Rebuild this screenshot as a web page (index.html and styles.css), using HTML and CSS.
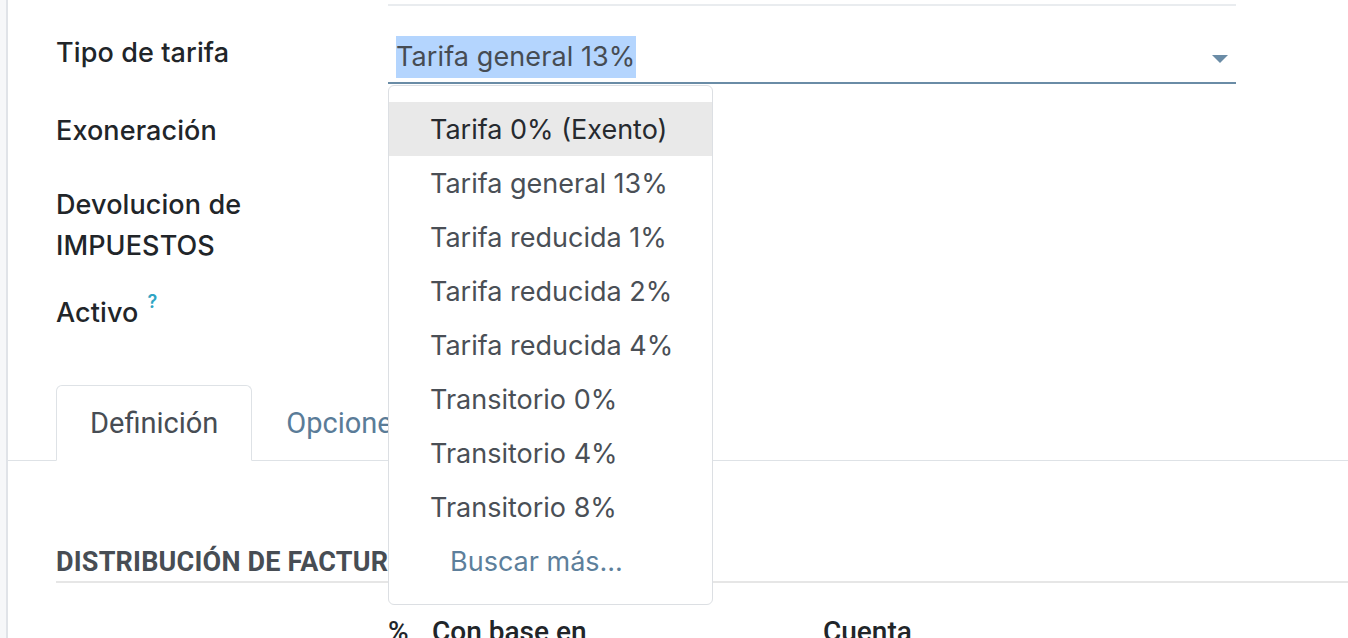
FILE: index.html
```html
<!DOCTYPE html>
<html lang="es">
<head>
<meta charset="utf-8">
<title>Impuesto</title>
<link rel="stylesheet" href="styles.css">
</head>
<body>
<div class="page">
  <div class="gutter"></div>
  <div class="sheet">
    <div class="prev-line"></div>
    <div class="form">
      <div class="label l1">Tipo de tarifa</div>
      <div class="field f1">
        <div class="select">
          <span class="value">Tarifa general 13%</span>
          <span class="caret"></span>
        </div>
        <ul class="dropdown">
          <li class="item active">Tarifa 0% (Exento)</li>
          <li class="item">Tarifa general 13%</li>
          <li class="item">Tarifa reducida 1%</li>
          <li class="item">Tarifa reducida 2%</li>
          <li class="item">Tarifa reducida 4%</li>
          <li class="item">Transitorio 0%</li>
          <li class="item">Transitorio 4%</li>
          <li class="item">Transitorio 8%</li>
          <li class="item more">Buscar más...</li>
        </ul>
      </div>
      <div class="label l2">Exoneración</div>
      <div class="field"></div>
      <div class="label l3">Devolucion de<br>IMPUESTOS</div>
      <div class="field"></div>
      <div class="label l4">Activo<sup class="help">?</sup></div>
      <div class="field"></div>
    </div>

    <div class="tabs">
      <div class="tab active">Definición</div>
      <div class="tab">Opciones avanzadas</div>
    </div>

    <div class="section">
      <h3 class="section-title">DISTRIBUCIÓN DE FACTURAS</h3>
      <div class="cols">
        <span class="col-pct">%</span>
        <span class="col-base">Con base en</span>
        <span class="col-acc">Cuenta</span>
      </div>
    </div>
  </div>
</div>
</body>
</html>
```
FILE: styles.css
```css
* { box-sizing: border-box; }
html, body { margin: 0; padding: 0; }
body {
  background: #fff;
  font-family: Inter, "Liberation Sans", sans-serif;
  color: #212529;
  overflow: hidden;
}
.page {
  display: flex;
  height: 638px;
}
.gutter {
  width: 8px;
  flex: none;
  background: #f6f7f9;
  border-right: 2px solid #e0e3e8;
}
.sheet {
  flex: 1;
  min-width: 0;
}
.prev-line {
  margin: 4px 0 0 380px;
  width: 848px;
  height: 2px;
  background: #e9ecef;
}
.form {
  display: grid;
  grid-template-columns: 332px 848px;
  padding-left: 48px;
}
.label {
  font-size: 27px;
  line-height: 40px;
  font-weight: 500;
  color: #212529;
  letter-spacing: 0.1px;
}
.l1 { margin-top: 27px; }
.l2 { margin-top: 27px; }
.l3 { margin-top: 33px; line-height: 41px; }
.l4 { margin-top: 27px; }
.help {
  color: #2fa4c3;
  font-size: 18px;
  font-weight: 600;
  margin-left: 9px;
  vertical-align: 0;
  position: relative;
  top: -14px;
}
.f1 {
  position: relative;
  padding-top: 28px;
}
.select {
  height: 50px;
  border-bottom: 2px solid #6a8ca6;
  display: flex;
  align-items: center;
  padding-left: 8px;
  padding-bottom: 2px;
}
.value {
  background: #b4d5fe;
  color: #464c53;
  font-size: 27px;
  line-height: 42px;
  letter-spacing: 0.1px;
}
.caret {
  margin-left: auto;
  margin-right: 8px;
  width: 0;
  height: 0;
  border-left: 8px solid transparent;
  border-right: 8px solid transparent;
  border-top: 8px solid #6a8ca6;
  margin-top: 4px;
}
.dropdown {
  position: absolute;
  top: 79px;
  left: 0;
  width: 325px;
  height: 520px;
  margin: 0;
  padding: 16px 0 0;
  list-style: none;
  background: #fff;
  border: 1px solid #dcdfe3;
  border-radius: 6px;
  z-index: 5;
}
.item {
  height: 54px;
  line-height: 56px;
  padding-left: 41px;
  font-size: 27px;
  color: #4a4f56;
  white-space: nowrap;
}
.item.active {
  background: #e9e9e9;
  color: #262a2f;
}
.item.more {
  padding-left: 61px;
  color: #5d7f9b;
}
.tabs {
  margin-top: 49px;
  display: flex;
  border-bottom: 1px solid #dee2e6;
  padding-left: 48px;
  height: 76px;
  font-family: Roboto, "Liberation Sans", sans-serif;
}
.tab {
  font-size: 29px;
  line-height: 74px;
  padding: 0 33px;
  color: #5a7c98;
  border: 1px solid transparent;
  border-radius: 6px 6px 0 0;
  white-space: nowrap;
}
.tab.active {
  color: #474d54;
  border-color: #dee2e6;
  border-bottom-color: #fff;
  background: #fff;
  height: 76px;
}
.section {
  padding-left: 48px;
  font-family: Roboto, "Liberation Sans", sans-serif;
}
.section-title {
  margin: 85px 0 0;
  font-size: 27px;
  line-height: 32px;
  font-weight: 700;
  color: #474d54;
  padding-bottom: 3px;
  border-bottom: 2px solid #e6e6e6;
  letter-spacing: 0.2px;
  white-space: nowrap;
}
.cols {
  display: flex;
  margin-top: 34px;
  font-size: 28px;
  line-height: 30px;
  font-weight: 500;
  color: #212529;
}
.col-pct { margin-left: 332px; width: 44px; }
.col-base { width: 391px; }
```
